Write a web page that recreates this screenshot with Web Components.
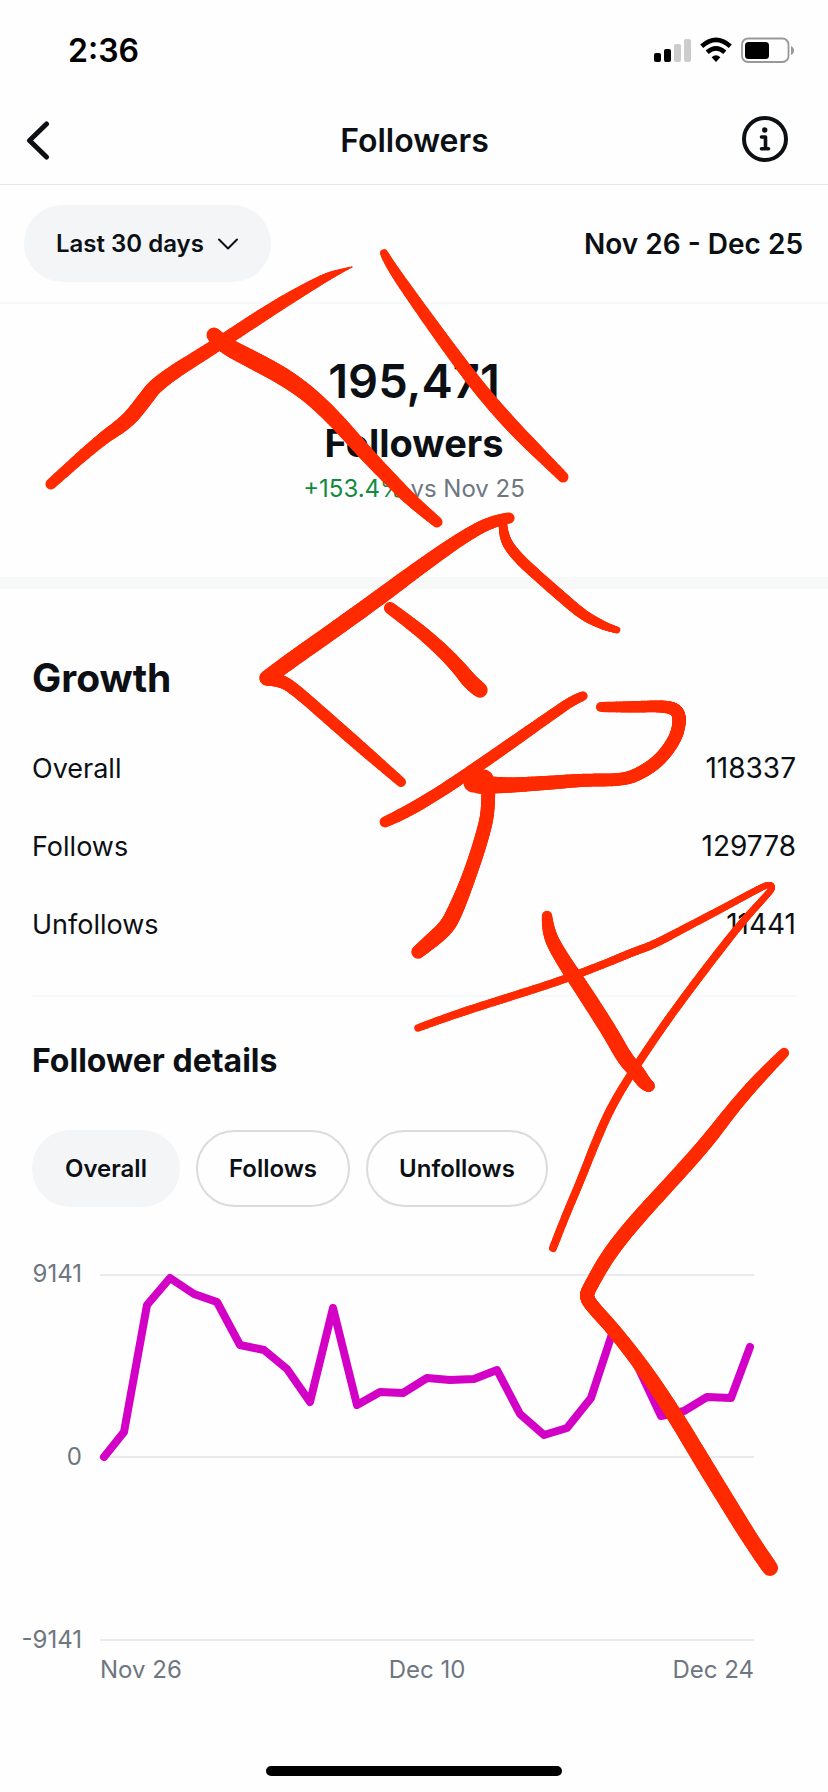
<!DOCTYPE html>
<html lang="en">
<head>
<meta charset="UTF-8">
<meta name="viewport" content="width=device-width, initial-scale=1">
<title>Followers</title>
<style>
  body {
    margin: 0;
    background: #fefefe;
    color: #0c1014;
    font-family: Inter, "Liberation Sans", sans-serif;
    font-size: 24px;
  }
</style>
</head>
<body>
<followers-page></followers-page>

<script>
class StatusBar extends HTMLElement {
  constructor() {
    super();
    this.attachShadow({ mode: 'open' }).innerHTML = `
    <style>
      :host {
        display: flex;
        justify-content: space-between;
        align-items: center;
        height: 96px;
        padding: 4px 34px 0 68px;
        box-sizing: border-box;
        color: #000;
      }
      time { font-size: 32px; font-weight: 600; }
      .icons { display: flex; align-items: center; gap: 9px; }
      svg { display: block; }
    </style>
    <time><slot></slot></time>
    <div class="icons">
      <svg width="38" height="26" viewBox="0 0 38 26" aria-hidden="true">
        <rect x="1" y="16" width="7" height="9" rx="2"/>
        <rect x="11" y="12" width="7" height="13" rx="2"/>
        <rect x="21" y="7" width="7" height="18" rx="2" fill="#ccc"/>
        <rect x="31" y="2" width="7" height="23" rx="2" fill="#ccc"/>
      </svg>
      <svg width="32" height="26" viewBox="0 0 32 26" aria-hidden="true">
        <g fill="none" stroke="#000" stroke-width="4.6">
          <path d="M1.700 9.200Q16 -3.400 30.300 9.200"/>
          <path d="M7.200 15.200Q16 7.400 24.800 15.200"/>
        </g>
        <path d="M11.600 20.300Q16 16.300 20.400 20.300L16 25z"/>
      </svg>
      <svg width="53" height="26" viewBox="0 0 53 26" aria-hidden="true">
        <rect x="1" y="1.500" width="46.500" height="23.500" rx="6" fill="none" stroke="#999" stroke-width="1.800"/>
        <rect x="4" y="5" width="24" height="17" rx="3.500"/>
        <path d="M50 9Q53 10.500 53 13.500T50 18z" fill="#999"/>
      </svg>
    </div>
    `;
  }
}

class NavHeader extends HTMLElement {
  constructor() {
    super();
    this.attachShadow({ mode: 'open' }).innerHTML = `
    <style>
      :host {
        display: grid;
        grid-template-columns: 1fr auto 1fr;
        align-items: center;
        height: 89px;
        box-sizing: border-box;
        padding: 0 39px 0 26px;
        border-bottom: 1px solid #e6e6e6;
      }
      h1 { margin: 0; padding-left: 14px; font-size: 32px; font-weight: 600; }
      button { padding: 0; border: 0; background: none; cursor: pointer; }
      .info { justify-self: end; }
      .back { justify-self: start; }
      svg { display: block; fill: none; stroke: #0c1014; stroke-linecap: round; }
    </style>
    <button class="back" aria-label="Back">
      <svg width="26" height="46" viewBox="0 0 26 46"><path d="M20.500 7L3.500 23.500L20.500 40" stroke-width="5" stroke-linejoin="round"/></svg>
    </button>
    <h1><slot></slot></h1>
    <button class="info" aria-label="About this metric">
      <svg width="48" height="50" viewBox="0 0 48 50">
        <circle cx="24" cy="24" r="21" stroke-width="4"/>
        <circle cx="23.700" cy="15" r="2.700" fill="#0c1014" stroke="none"/>
        <path d="M20.500 22H24.500V33.500M20.500 33.800H27.500" stroke-width="3.600" stroke-linejoin="round"/>
      </svg>
    </button>
    `;
  }
}

class DateFilter extends HTMLElement {
  constructor() {
    super();
    this.attachShadow({ mode: 'open' }).innerHTML = `
    <style>
      :host {
        display: flex;
        justify-content: space-between;
        align-items: center;
        padding: 20px 25px 20px 24px;
        border-bottom: 2px solid #f7f8f9;
      }
      label { display: flex; align-items: center; }
      select {
        appearance: none;
        height: 77px;
        padding: 0 67px 0 32px;
        border: 0;
        border-radius: 39px;
        background: #f3f5f7;
        color: inherit;
        font: 600 24px Inter, "Liberation Sans", sans-serif;
      }
      svg { margin-left: -54px; pointer-events: none; }
      .range { font-size: 28px; font-weight: 600; }
    </style>
    <label>
      <select aria-label="Date range"><option>Last 30 days</option></select>
      <svg width="22" height="14" viewBox="0 0 22 14"><path d="M2 2.500L11 11.500L20 2.500" fill="none" stroke="#0c1014" stroke-width="2" stroke-linecap="round" stroke-linejoin="round"/></svg>
    </label>
    <span class="range"><slot></slot></span>
    `;
  }
}

class FollowerTotal extends HTMLElement {
  constructor() {
    super();
    this.attachShadow({ mode: 'open' }).innerHTML = `
    <style>
      :host {
        display: flex;
        flex-direction: column;
        align-items: center;
        padding: 46px 0 73px;
        border-bottom: 12px solid #f7f9f9;
      }
      .count { font-size: 47px; line-height: 62px; font-weight: 600; }
      .name { font-size: 38px; line-height: 62px; font-weight: 700; }
      .change { font-size: 24px; line-height: 30px; color: #6e7680; }
      .up { color: #128a3e; }
    </style>
    <div class="count"><slot name="count"></slot></div>
    <div class="name"><slot name="name"></slot></div>
    <div class="change"><span class="up"><slot name="change"></slot></span> <slot name="since"></slot></div>
    `;
  }
}

class GrowthTable extends HTMLElement {
  connectedCallback() {
    const rows = [['Overall', 118337], ['Follows', 129778], ['Unfollows', 11441]];
    this.attachShadow({ mode: 'open' }).innerHTML = `
    <style>
      :host {
        display: block;
        margin: 0 32px;
        padding: 58px 0 32px;
        border-bottom: 2px solid #f7f8f9;
      }
      h2 { margin: 0 0 20px; font-size: 39px; line-height: 62px; font-weight: 700; }
      table { width: 100%; border-collapse: collapse; font-size: 27px; }
      th, td { height: 78px; padding: 0; font-weight: 400; text-align: left; }
      td { font-size: 28px; text-align: right; }
    </style>
    <h2>Growth</h2>
    <table>
      ${rows.map(([name, value]) => `<tr><th scope="row">${name}</th><td>${value}</td></tr>`).join('')}
    </table>
    `;
  }
}

class FilterChip extends HTMLElement {
  constructor() {
    super();
    this.attachShadow({ mode: 'open' }).innerHTML = `
    <style>
      :host { display: block; }
      button {
        height: 77px;
        padding: 0 31px;
        border: 2px solid #dbdbdb;
        border-radius: 39px;
        background: none;
        color: inherit;
        font: 600 24px Inter, "Liberation Sans", sans-serif;
        cursor: pointer;
      }
      :host([selected]) button { background: #f3f5f7; border-color: #f3f5f7; }
    </style>
    <button aria-pressed="${this.hasAttribute('selected')}"><slot></slot></button>
    `;
  }
}

class FollowerChart extends HTMLElement {
  connectedCallback() {
    // one point per day, y runs down from the 9141 line, zero is at 183
    const points = [
      [4, 183], [24, 158], [47, 31], [70, 4], [94, 20], [117, 28], [140, 71], [164, 76],
      [187, 95], [210, 128], [233, 34], [257, 131], [280, 118], [303, 119], [327, 104],
      [350, 106], [374, 105], [397, 96], [420, 140], [444, 161], [467, 154], [491, 124],
      [514, 54], [538, 93], [561, 142], [584, 137], [607, 123], [631, 124], [650, 73],
    ];
    this.attachShadow({ mode: 'open' }).innerHTML = `
    <style>
      :host {
        display: grid;
        grid-template-columns: 82px 1fr;
        column-gap: 18px;
        padding: 52px 74px 0 0;
        color: #6e7680;
        line-height: 30px;
      }
      .y {
        display: flex;
        flex-direction: column;
        justify-content: space-between;
        text-align: right;
        height: 396px;
      }
      .plot { padding: 15px 0; }
      svg { display: block; width: 100%; height: 366px; overflow: visible; }
      .grid { stroke: #e8ebee; stroke-width: 2; }
      .line { fill: none; stroke: #d300c5; stroke-width: 8; stroke-linecap: round; stroke-linejoin: round; }
      path { vector-effect: non-scaling-stroke; }
      .x { grid-column: 2; display: flex; justify-content: space-between; }
    </style>
    <div class="y"><span>9141</span><span>0</span><span>-9141</span></div>
    <div class="plot">
      <svg viewBox="0 0 654 366" preserveAspectRatio="none" role="img" aria-label="Overall followers by day">
        <path class="grid" d="M0 1H654M0 183H654M0 366H654"/>
        <path class="line" d="M${points.map((p) => p.join(' ')).join('L')}"/>
      </svg>
    </div>
    <div class="x"><span>Nov 26</span><span>Dec 10</span><span>Dec 24</span></div>
    `;
  }
}

// Freehand marker layer. Each stroke is a list of [x, y, radius].
const STROKES = [
  [[51, 484, 5.5], [97, 442, 6], [127, 422, 7.5], [143, 402, 7.7], [158, 382, 7.5], [217, 345, 6.7], [273, 308, 6.7], [317, 282, 5], [335, 273, 3.3], [352, 267, 0.7]],
  [[214, 335, 7.3], [222, 344, 8.5], [253, 360, 9], [283, 376, 9], [310, 395, 8.3], [337, 421, 8], [367, 455, 7.5], [395, 484, 7], [413, 502, 6.5], [437, 522, 5.5]],
  [[384, 253, 3.7], [388, 262, 5], [420, 308, 6], [457, 359, 6.7], [483, 393, 7], [513, 427, 7], [537, 451, 6.5], [563, 477, 5.5]],
  [[509, 518, 5.5], [492, 521, 6], [463, 537, 6.5], [423, 565, 7.3], [380, 597, 8], [330, 633, 8], [290, 661, 8], [267, 678, 7.7]],
  [[267, 678, 7.7], [281, 680, 6.3], [297, 691, 6], [330, 720, 6], [363, 749, 6], [401, 782, 5]],
  [[503, 522, 4], [503, 537, 5], [516, 556, 5.5], [540, 578, 5.5], [563, 598, 5.5], [583, 615, 5.3], [600, 624, 4.5], [610, 628, 3.7], [617, 630, 3.3]],
  [[390, 608, 6], [417, 628, 6.5], [443, 651, 7], [460, 669, 7.3], [471, 683, 8], [480, 690, 7.7]],
  [[385, 822, 5.3], [403, 814, 6], [437, 794, 6], [470, 772, 6], [513, 742, 5.7], [550, 716, 5.3], [573, 700, 5], [583, 696, 4.7]],
  [[601, 707, 5], [630, 707, 5.7], [665, 706, 6], [677, 710, 6.5], [680, 720, 6.7], [676, 738, 6.5], [661, 759, 6.5], [643, 772, 6.5], [624, 780, 6.3], [583, 780, 6.5], [547, 783, 7], [497, 786, 7.7], [478, 784, 9.5]],
  [[473, 783, 8.5], [484, 779, 9.5]],
  [[488, 784, 7], [489, 808, 6.8], [482, 838, 7], [468, 880, 7], [454, 914, 8], [446, 928, 8], [430, 942, 7.7], [418, 952, 6.7]],
  [[418, 1028, 3.7], [450, 1016, 4], [500, 1000, 4], [560, 981, 4], [607, 963, 4], [633, 952, 4], [653, 945, 4], [687, 927, 3.7], [727, 906, 3.5], [760, 888, 3.3], [770, 884, 3], [773, 888, 3], [765, 897, 3.3], [743, 921, 3.7], [713, 959, 4], [673, 1012, 4], [638, 1063, 4], [612, 1105, 4.3], [596, 1141, 4.3], [580, 1182, 4], [565, 1217, 4], [553, 1248, 4]],
  [[547, 916, 5], [548, 932, 6.5], [559, 954, 7.3], [583, 990, 8], [610, 1032, 8], [625, 1059, 8], [637, 1072, 7.7], [645, 1084, 7], [649, 1086, 6]],
  [[784, 1053, 5], [760, 1077, 6], [733, 1108, 6.3], [707, 1142, 7], [673, 1180, 7], [636, 1220, 7.3], [608, 1255, 7.3], [590, 1287, 7], [586, 1296, 7], [591, 1305, 7], [614, 1330, 7], [645, 1370, 7.5], [674, 1414, 8], [701, 1459, 8.3], [731, 1508, 8.3], [754, 1545, 8], [770, 1568, 8]],
];

class MarkerLayer extends HTMLElement {
  connectedCallback() {
    this.attachShadow({ mode: 'open' }).innerHTML = `
    <style>
      :host { display: block; position: absolute; inset: 0 0 auto; pointer-events: none; }
      svg { display: block; width: 100%; stroke: #ff2a00; stroke-linecap: round; }
    </style>
    <svg viewBox="0 0 828 1792" aria-hidden="true">${STROKES.map((s) => this.renderStroke(s)).join('')}</svg>
    `;
  }

  // curve from midpoint to midpoint, in short pieces so the width can change
  renderStroke(points) {
    const steps = 14;
    const last = points.length - 1;
    const middle = (a, b) => a.map((v, k) => (v + b[k]) / 2);
    const curve = [points[0]];
    for (let i = 1; i < last; i++) {
      const from = i === 1 ? points[0] : middle(points[i - 1], points[i]);
      const to = i === last - 1 ? points[last] : middle(points[i], points[i + 1]);
      for (let n = 1; n <= steps; n++) {
        const t = n / steps;
        curve.push(from.map((v, k) => (1 - t) * (1 - t) * v + 2 * t * (1 - t) * points[i][k] + t * t * to[k]));
      }
    }
    if (last === 1) curve.push(points[1]);
    return curve.slice(1).map(([x, y, r], i) => {
      const [px, py] = curve[i];
      return `<path d="M${px.toFixed(2)} ${py.toFixed(2)}L${x.toFixed(2)} ${y.toFixed(2)}" stroke-width="${(r * 2).toFixed(2)}"/>`;
    }).join('');
  }
}

class FollowersPage extends HTMLElement {
  constructor() {
    super();
    this.attachShadow({ mode: 'open' }).innerHTML = `
    <style>
      :host { display: flex; flex-direction: column; position: relative; min-height: 100vh; }
      h2 { margin: 0; padding: 44px 32px 0; font-size: 32px; line-height: 40px; font-weight: 700; }
      .chips { display: flex; gap: 16px; padding: 49px 32px 0; }
      .home { width: 296px; height: 10px; margin: auto auto 16px; border-radius: 5px; background: #000; }
    </style>
    <status-bar>2:36</status-bar>
    <nav-header>Followers</nav-header>
    <main>
      <date-filter>Nov 26 - Dec 25</date-filter>
      <follower-total>
        <span slot="count">195,471</span>
        <span slot="name">Followers</span>
        <span slot="change">+153.4%</span>
        <span slot="since">vs Nov 25</span>
      </follower-total>
      <growth-table></growth-table>
      <h2>Follower details</h2>
      <div class="chips">
        <filter-chip selected>Overall</filter-chip>
        <filter-chip>Follows</filter-chip>
        <filter-chip>Unfollows</filter-chip>
      </div>
      <follower-chart></follower-chart>
    </main>
    <div class="home"></div>
    <marker-layer></marker-layer>
    `;
  }
}

customElements.define('status-bar', StatusBar);
customElements.define('nav-header', NavHeader);
customElements.define('date-filter', DateFilter);
customElements.define('follower-total', FollowerTotal);
customElements.define('growth-table', GrowthTable);
customElements.define('filter-chip', FilterChip);
customElements.define('follower-chart', FollowerChart);
customElements.define('marker-layer', MarkerLayer);
customElements.define('followers-page', FollowersPage);
</script>
</body>
</html>
